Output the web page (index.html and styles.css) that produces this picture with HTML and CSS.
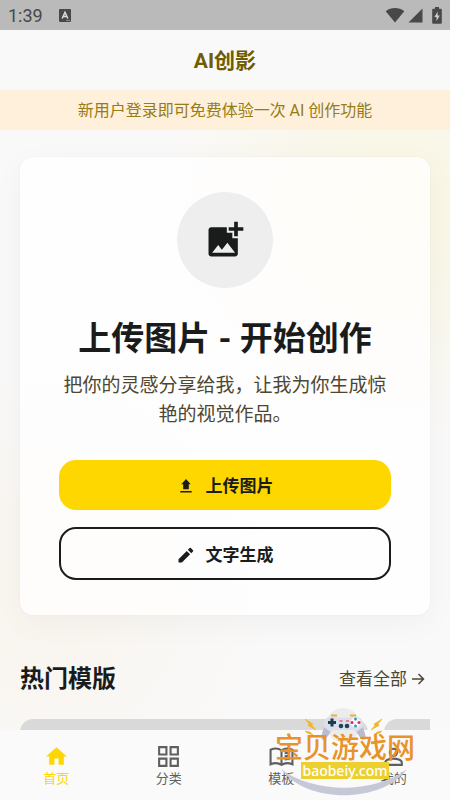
FILE: index.html
```html
<!DOCTYPE html>
<html lang="zh-CN">
<head>
<meta charset="utf-8">
<meta name="viewport" content="width=device-width, initial-scale=1">
<title>AI创影</title>
<link rel="stylesheet" href="styles.css">
</head>
<body>
<div class="status">
  <span class="status-time">1:39</span>
  <svg class="status-app" viewBox="0 0 12 13" aria-hidden="true"><rect width="12" height="13" rx="1" fill="#484848"/><path d="M3.2 9.500 6 3.300l2.800 6.200M4.200 7.600h3.600" fill="none" stroke="#ddd" stroke-width="1.500"/><path d="M7 11.400h4" stroke="#aaa" stroke-width=".7"/></svg>
  <span class="status-right">
    <svg width="20" height="16" viewBox="0 0 20 16" aria-hidden="true"><path d="M.7 4.200C6-.2 14-.2 19.300 4.200L10 15.500z" fill="#484848"/></svg>
    <svg width="15" height="15" viewBox="0 0 15 15" aria-hidden="true"><path d="M14.500.5v14H.5z" fill="#484848"/></svg>
    <svg class="battery" width="10" height="17" viewBox="0 0 10 17" aria-hidden="true"><path d="M3 0h4v1.700h1.800q1 0 1 1V15.800q0 1-1 1H1.200q-1 0-1-1V2.700q0-1 1-1H3z" fill="#484848"/><path d="M5.800 4.500 2.300 10h2.200v4L7.800 8.400H5.600z" fill="#ccc"/></svg>
  </span>
</div>
<header class="topbar"><h1>AI创影</h1></header>
<p class="notice">新用户登录即可免费体验一次 AI 创作功能</p>
<main class="content">
  <section class="card">
    <div class="badge">
      <svg viewBox="0 0 24 24" aria-hidden="true"><path d="M19 7v3h-2V7h-3V5h3V2h2v3h3v2zM16 11V8h-3V5H4.500C3.700 5 3 5.700 3 6.500v13c0 .8.7 1.500 1.500 1.500h13c.8 0 1.500-.7 1.500-1.500V11zM5 19l3.300-4.300 2 2.600 3-3.800L17.500 19z" fill="#1a1c1c" fill-rule="evenodd"/></svg>
    </div>
    <h2>上传图片 - 开始创作</h2>
    <p class="lead">把你的灵感分享给我，让我为你生成惊艳的视觉作品。</p>
    <div class="actions">
      <button class="btn btn-fill" type="button"><svg viewBox="0 0 18 18" aria-hidden="true"><path d="M9 2l4.700 5.200H11.800v5H6.200v-5H4.300zM3.300 14h11.400v1.500H3.300z" fill="currentColor"/></svg>上传图片</button>
      <button class="btn btn-line" type="button"><svg viewBox="0 0 24 24" aria-hidden="true"><path d="M2 17.500V22h4.500L17.500 11 13 6.500zM21.300 7.200a1.200 1.200 0 0 0 0-1.700l-2.800-2.800a1.200 1.200 0 0 0-1.700 0l-2.300 2.300 4.500 4.500z" fill="currentColor"/></svg>文字生成</button>
    </div>
  </section>
  <section class="popular">
    <div class="section-head">
      <h3>热门模版</h3>
      <a href="#all">查看全部<svg viewBox="0 0 14 14" aria-hidden="true"><path d="M1 7h11M7.500 2l5 5-5 5" fill="none" stroke="currentColor" stroke-width="1.500"/></svg></a>
    </div>
    <div class="tiles"><div class="tile tile-wide"></div><div class="tile tile-next"></div></div>
  </section>
</main>
<nav class="tabs">
  <a class="tab tab-on" href="#home"><svg viewBox="0 0 24 24" aria-hidden="true"><path d="M10 20v-6h4v6h5v-8h3L12 3 2 12h3v8z" fill="currentColor"/></svg>首页</a>
  <a class="tab" href="#category"><svg viewBox="0 0 24 24" aria-hidden="true"><path d="M3 3h7v7H3zM14 3h7v7h-7zM3 14h7v7H3zM14 14h7v7h-7z" fill="none" stroke="currentColor" stroke-width="2"/></svg>分类</a>
  <a class="tab" href="#templates"><svg viewBox="0 0 24 24" aria-hidden="true"><path d="M12 20V6C9 4 5 4 1.500 5.500v14C5 18 9 18 12 20c3-2 7-2 10.500-.5v-14C19 4 15 4 12 6M15 9q2.500-1 5-.5M15 12q2.500-1 5-.5M15 15q2.500-1 5-.5" fill="none" stroke="currentColor" stroke-width="2"/></svg>模板</a>
  <a class="tab" href="#me"><svg viewBox="0 0 24 24" aria-hidden="true"><circle cx="12" cy="8" r="3.500" fill="none" stroke="currentColor" stroke-width="2"/><path d="M4 20v-2c0-3 5-4 8-4s8 1 8 4v2z" fill="none" stroke="currentColor" stroke-width="2"/></svg>我的</a>
  <div class="mark">
    <svg class="mark-art" viewBox="0 0 150 92" aria-hidden="true">
      <circle cx="73" cy="17" r="17" fill="#ececec"/>
      <path d="M11 61C44 86 104 86 137 61C112 96 36 96 11 61z" fill="#c6c8d6"/>
      <path d="M61 7.500h6M80 7.500h6" stroke="#e6b23c" stroke-width="2"/>
      <path d="M59 9c5-1 9 1 14.500 1S83 8 88 9c4 1 5 5 5 9l2.500 10c1 4-3 5-5 2l-4-6c-1-1-2-2-4-2H64.500c-2 0-3 1-4 2l-4 6c-2 3-6 2-5-2L54 18c0-4 1-8 5-9z" fill="#dcdeeb"/>
      <path d="M54 19l-2.500 9c-1 4 3 5 5 2l4-6zM93 19l2.500 9c1 4-3 5-5 2l-4-6z" fill="#b9bccd"/>
      <path d="M62 10.500v8M58 14.500h8" stroke="#193d4d" stroke-width="3"/>
      <circle cx="71" cy="18" r="2.300" fill="#234454"/><circle cx="77" cy="18" r="2.300" fill="#234454"/>
      <path d="M69.500 13h3M76 13h3" stroke="#d3324a" stroke-width="1.200"/>
      <circle cx="85.500" cy="14.500" r="5" fill="#f7f7fc"/>
      <circle cx="85.500" cy="11" r="1.500" fill="#3999b4"/><circle cx="82" cy="14.500" r="1.500" fill="#d3324a"/><circle cx="89" cy="14.500" r="1.500" fill="#d3324a"/><circle cx="85.500" cy="18" r="1.500" fill="#3999b4"/>
      <path d="M35 11l8 5-1 1.500 4 4.500-8-4.500 1-1.500zM112 11l-8 5 1 1.500-4 4.500 8-4.500-1-1.500zM35 23l5 1 3 3-6-2zM112 23l-5 1-3 3 6-2z" fill="#eeb52e" stroke="#eeb52e" stroke-width=".6"/>
    </svg>
    <span class="mark-name">宝贝游戏网</span>
    <span class="mark-site">baobeiy.com</span>
  </div>
</nav>
</body>
</html>
```
FILE: styles.css
```css
* { box-sizing: border-box; }
body {
  margin: 0;
  height: 100vh;
  display: flex;
  flex-direction: column;
  overflow: hidden;
  background: #f9f9f9;
  color: #1a1c1c;
  font-family: Roboto, "Noto Sans CJK SC", sans-serif;
}
h1, h2, h3, p { margin: 0; }
a { color: inherit; text-decoration: none; }
svg { display: block; flex: none; }
.status {
  flex: none;
  display: flex;
  align-items: center;
  height: 30px;
  padding: 0 8px;
  background: #bababa;
  color: #484848;
}
.status-time { font-size: 18px; }
.status-app { width: 12px; height: 13px; margin-left: 16px; }
.status-right { display: flex; align-items: center; gap: 3px; margin-left: auto; }
.battery { margin-left: 6px; }
.topbar {
  flex: none;
  display: flex;
  align-items: center;
  justify-content: center;
  height: 60px;
  padding-top: 2px;
  color: #705d00;
}
.topbar h1 { font-size: 21px; font-weight: 700; line-height: 30px; }
.notice {
  flex: none;
  padding-top: 2px;
  background: #fff0dc;
  color: #967c16;
  font-size: 16px;
  line-height: 38px;
  text-align: center;
}
.content {
  flex: 1;
  min-height: 0;
  overflow: hidden;
  padding: 27px 20px 0;
  background:
    radial-gradient(circle at 88% 12%, rgba(255, 225, 50, .12), rgba(255, 225, 50, 0) 240px),
    radial-gradient(circle at 8% 78%, rgba(255, 180, 60, .06), rgba(255, 180, 60, 0) 240px);
}
.card {
  padding: 35px 39px;
  border-radius: 13px;
  background: rgba(255, 255, 255, .75);
  box-shadow: 0 0 2px rgba(0, 0, 0, .06), 0 8px 32px rgba(0, 0, 0, .04);
  text-align: center;
}
.badge {
  display: flex;
  align-items: center;
  justify-content: center;
  width: 96px;
  height: 96px;
  margin: 0 auto;
  border-radius: 50%;
  background: #eee;
}
.badge svg { width: 44px; height: 44px; }
.card h2 { margin-top: 31px; font-size: 33px; font-weight: 700; line-height: 40px; }
.lead { margin-top: 12px; color: #4d4732; font-size: 19px; line-height: 29px; }
.actions { display: flex; flex-direction: column; gap: 17px; margin-top: 31px; }
.btn {
  display: flex;
  align-items: center;
  justify-content: center;
  gap: 11px;
  height: 50px;
  padding: 2px 0 0;
  border: 0;
  border-radius: 17px;
  color: #1a1c1c;
  font: 700 17px/24px Roboto, "Noto Sans CJK SC", sans-serif;
}
.btn svg { width: 18px; height: 18px; }
.btn-fill { background: #ffd700; }
.btn-line { height: 53px; border: 2px solid #1a1c1c; background: transparent; }
.section-head {
  display: flex;
  align-items: center;
  justify-content: space-between;
  margin-top: 46px;
  line-height: 36px;
}
.section-head h3 { font-size: 24px; font-weight: 700; }
.section-head a { display: flex; align-items: center; gap: 4px; padding-right: 5px; color: #4d4732; font-size: 17px; line-height: 32px; }
.section-head svg { width: 14px; height: 14px; }
.tiles { display: flex; gap: 16px; margin-top: 22px; }
.tile { height: 180px; background: linear-gradient(#dadada, #cfcfcf); }
.tile-wide { flex: 1; border-radius: 13px; }
.tile-next { width: 46px; border-radius: 13px 0 0 0; }
.tabs {
  position: relative;
  flex: none;
  display: grid;
  grid-template-columns: repeat(4, 1fr);
  height: 70px;
  background: #fafafa;
  color: #5f5f5f;
}
.tab {
  display: flex;
  flex-direction: column;
  align-items: center;
  padding-top: 14px;
  font-size: 13px;
  line-height: 20px;
}
.tab svg { width: 25px; height: 25px; }
.tab-on { color: #ffd700; }
.mark {
  position: absolute;
  right: 30px;
  bottom: 0;
  width: 150px;
  height: 92px;
  display: flex;
  flex-direction: column;
  align-items: center;
  padding-top: 28px;
  pointer-events: none;
}
.mark-art { position: absolute; inset: 0; }
.mark-name { position: relative; color: #e8922a; font-size: 28px; font-weight: 500; line-height: 26px; }
.mark-site {
  position: relative;
  padding: 0 1px;
  background: #ecd02f;
  color: #fff;
  font: 500 14px/17px "Noto Sans", sans-serif;
}
```
